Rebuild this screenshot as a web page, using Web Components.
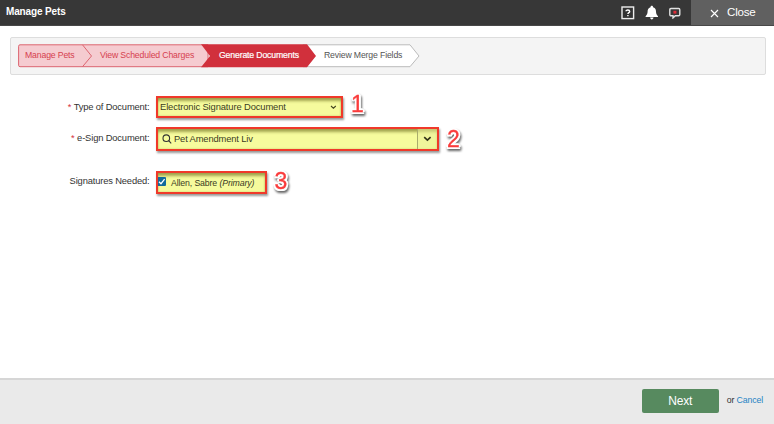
<!DOCTYPE html>
<html lang="en">
<head>
<meta charset="utf-8">
<title>Manage Pets</title>
<style>
html,body{margin:0;height:100%;overflow:hidden;background:#fff}
body{font-family:"Liberation Sans",Arial,sans-serif;color:#333}
</style>
</head>
<body>
<pets-dialog></pets-dialog>
<script>
function define(name, html) {
  customElements.define(name, class extends HTMLElement {
    constructor() {
      super();
      const t = document.createElement('template');
      t.innerHTML = html;
      this.attachShadow({mode: 'open'}).appendChild(t.content.cloneNode(true));
    }
  });
}

define('dialog-header', `
<style>
:host{display:flex;height:26px;box-sizing:border-box;background:#373737;border-bottom:1px solid #484848;color:#fff;align-items:stretch}
.title{flex:1;padding-left:6px;font:bold 10px/24px "Liberation Sans",sans-serif;letter-spacing:-.140px}
.icons{display:flex;align-items:center;gap:10px;padding-right:10.500px}
svg{display:block}
.close{width:83px;background:#606060;display:flex;align-items:center;box-sizing:border-box;padding-left:19px;gap:8px;font-size:11.600px;letter-spacing:-.240px;line-height:24px}
.close svg{margin-top:2px}
.close span{height:25px}
</style>
<div class="title"><slot></slot></div>
<div class="icons">
<svg width="14" height="14" viewBox="0 0 14 14"><rect x="1" y="1" width="11.6" height="11.6" fill="#333" stroke="#eee" stroke-width="1.4"/><path d="M5 5.3C5 3.5 8.7 3.5 8.7 5.4 8.7 6.7 6.9 6.6 6.9 8M6.9 9v1.3" fill="none" stroke="#fff" stroke-width="1.4"/></svg>
<svg width="14" height="15" viewBox="0 0 14 15"><path d="M6.800.8c.8 0 1.3.6 1.3 1.4C10.500 2.800 11 4.600 11 6.500 11 9 11.800 10 13 11.200V12H.6v-.8C1.800 10 2.600 9 2.600 6.500 2.600 4.600 3.200 2.800 5.500 2.200 5.500 1.400 6 .8 6.800.8zM5.100 12.600h3.400C8.400 15 5.200 15 5.100 12.600z" fill="#fff"/></svg>
<svg width="12" height="12" viewBox="0 0 12 12"><path d="M2 1.500h7.600q1.200 0 1.200 1.200v4.800q0 1.200-1.200 1.200H6.300L4 10.900V8.700H2Q.8 8.700.8 7.500V2.700Q.8 1.500 2 1.500z" fill="none" stroke="#e2e2e2" stroke-width="1.400"/><path d="M4.400 3.800h3v2.800h-3z" fill="#e02b38"/></svg>
</div>
<div class="close"><svg width="9" height="9" viewBox="0 0 9 9"><path d="M1 1l7 7M8 1L1 8" stroke="#fff" stroke-width="1.150"/></svg><span>Close</span></div>`);

define('step-trail', `
<style>
:host{display:block;box-sizing:border-box;margin:10.500px 8px 0 10px;height:38px;border:1px solid #ddd;border-radius:2px;background:#f4f4f4;padding:6.500px 7px}
.trail{display:grid;width:403px;height:24px}
svg,.labels{grid-area:1/1}
svg{display:block}
.labels{display:grid;grid-template-columns:75px 119px 105px auto;font-size:8.700px;letter-spacing:-.150px;line-height:22.500px;padding-left:7px;white-space:nowrap;color:#d5414f}
.on{color:#fff;-webkit-text-stroke:.200px #fff}
.next{color:#555}
</style>
<div class="trail">
<svg width="403" height="24" viewBox="0 0 403 24">
<path d="M285 .8H392L401 12 392 22.700H285z" fill="#fff" stroke="#bbb"/>
<path d="M2 .8H190V22.700H2Q.6 22.700.6 21.200V2.300Q.6.8 2 .8z" fill="#f5cbd0" stroke="#dc6570"/>
<path d="M64.500.8L73.500 12 64.500 22.700" fill="none" stroke="#dc6570"/>
<path d="M183 .3H289L298 12 289 23.200H183L192 12z" fill="#d1303c"/>
</svg>
<div class="labels"><span>Manage Pets</span><span>View Scheduled Charges</span><span class="on">Generate Documents</span><span class="next">Review Merge Fields</span></div>
</div>`);

define('form-row', `
<style>
:host{display:flex;align-items:flex-start;font-size:9.350px;letter-spacing:-.150px;color:#333}
.label{width:149.500px;text-align:right;line-height:var(--line,22px);white-space:nowrap;margin-right:6.500px}
i{font-style:normal;color:#d5303c;margin-right:2.500px;display:none}
:host([required]) i{display:inline}
</style>
<div class="label"><i>*</i><slot name="label"></slot></div><slot></slot>`);

define('marked-box', `
<style>
:host{display:flex;box-sizing:border-box;width:var(--w);height:var(--h);border:2px solid #f0392a;background:#f6fb9d;box-shadow:1px 2px 2px #0006,inset 0 4px 3px -1px #70702099,inset 0 0 2px #77772066;align-items:center;white-space:nowrap;color:#3b3b23}
</style><slot></slot>`);

define('select-field', `
<style>:host{display:flex;flex:1;align-items:center;justify-content:space-between;padding:0 4.500px 0 2px;font-size:9.400px;letter-spacing:-.120px;line-height:18px}</style>
<span><slot></slot></span>
<svg width="7" height="5" viewBox="0 0 7 5"><path d="M1 1l2.400 2.200L5.800 1" fill="none" stroke="#444422" stroke-width="1.100"/></svg>`);

define('search-field', `
<style>
:host{display:flex;flex:1;align-self:stretch;align-items:center;font-size:9.350px;letter-spacing:-.130px;padding-left:4px}
.text{flex:1;padding-left:2px;line-height:20px}
.drop{align-self:stretch;width:19.500px;border-left:1px solid #a9ac6c;display:flex;align-items:center;justify-content:center;background:#eaf09a88}
</style>
<svg width="10" height="10" viewBox="0 0 10 10"><circle cx="4.300" cy="4.200" r="3.300" fill="none" stroke="#333" stroke-width="1.100"/><path d="M6.700 6.700L9.200 9.300" stroke="#333" stroke-width="1.100"/></svg>
<span class="text"><slot></slot></span>
<div class="drop"><svg width="9" height="6" viewBox="0 0 9 6"><path d="M1.200 1.200l3.200 3 3.200-3" fill="none" stroke="#333319" stroke-width="1.600"/></svg></div>`);

define('check-field', `
<style>:host{display:flex;align-items:center;font-size:8.750px;letter-spacing:-.130px;line-height:20px}
svg{margin-top:-3px;margin-right:5px}span{padding-top:1px}</style>
<svg width="8" height="9" viewBox="0 0 8 9"><path d="M0 0H7Q8 0 8 1V8Q8 9 7 9H0z" fill="#116b9b"/><path d="M1 4.700L3 6.700 6.600 2.200" fill="none" stroke="#fff" stroke-width="1.300"/></svg>
<span><slot></slot></span>`);

define('callout-number', `
<style>:host{display:block;font-size:23px;letter-spacing:0;line-height:24px;color:#fa3c3c;filter:drop-shadow(1px 2px 1px #0009)}
span{-webkit-text-stroke:.300px #fa3c3c;text-shadow:2px 0 #fff,-2px 0 #fff,0 2px #fff,0 -2px #fff,1.500px 1.500px #fff,-1.500px 1.500px #fff,1.500px -1.500px #fff,-1.500px -1.500px #fff}</style><span><slot></slot></span>`);

define('dialog-footer', `
<style>
:host{display:flex;box-sizing:border-box;height:46px;border-top:2px solid #d6d6d6;background:#eaeaea;justify-content:flex-end;align-items:flex-start;padding:9px 11px 0 0}
button{width:77px;height:24px;border:0;border-radius:2px;background:#578a5f;color:#fff;font:12px/23px "Liberation Sans",sans-serif;letter-spacing:-.200px;padding:0;margin-right:8px}
span{font-size:8.750px;letter-spacing:-.140px;line-height:23px}a{color:#2582c4}
</style>
<button>Next</button><span>or <a>Cancel</a></span>`);

define('pets-dialog', `
<style>
:host{display:flex;flex-direction:column;height:424px;width:774px}
main{flex:1;display:flex;flex-direction:column;padding-top:21.500px}
callout-number.a{margin:-4px 0 0 8px}
callout-number.b{margin:0 0 0 8px}
callout-number.c{margin:-2px 0 0 7.500px}
form-row{height:24px}
.r1{margin-bottom:7px;--line:23px}
.r2{margin-bottom:20px}
.r3{--line:20px}
</style>
<dialog-header>Manage Pets</dialog-header>
<step-trail></step-trail>
<main>
<form-row class="r1" required><span slot="label">Type of Document:</span><marked-box style="--w:187px;--h:22px"><select-field>Electronic Signature Document</select-field></marked-box><callout-number class="a">1</callout-number></form-row>
<form-row class="r2" required><span slot="label">e-Sign Document:</span><marked-box style="--w:283px;--h:24px"><search-field>Pet Amendment Liv</search-field></marked-box><callout-number class="b">2</callout-number></form-row>
<form-row class="r3"><span slot="label">Signatures Needed:</span><marked-box style="--w:111px;--h:23px"><check-field>Allen, Sabre <em>(Primary)</em></check-field></marked-box><callout-number class="c">3</callout-number></form-row>
</main>
<dialog-footer></dialog-footer>`);
</script>
</body>
</html>
